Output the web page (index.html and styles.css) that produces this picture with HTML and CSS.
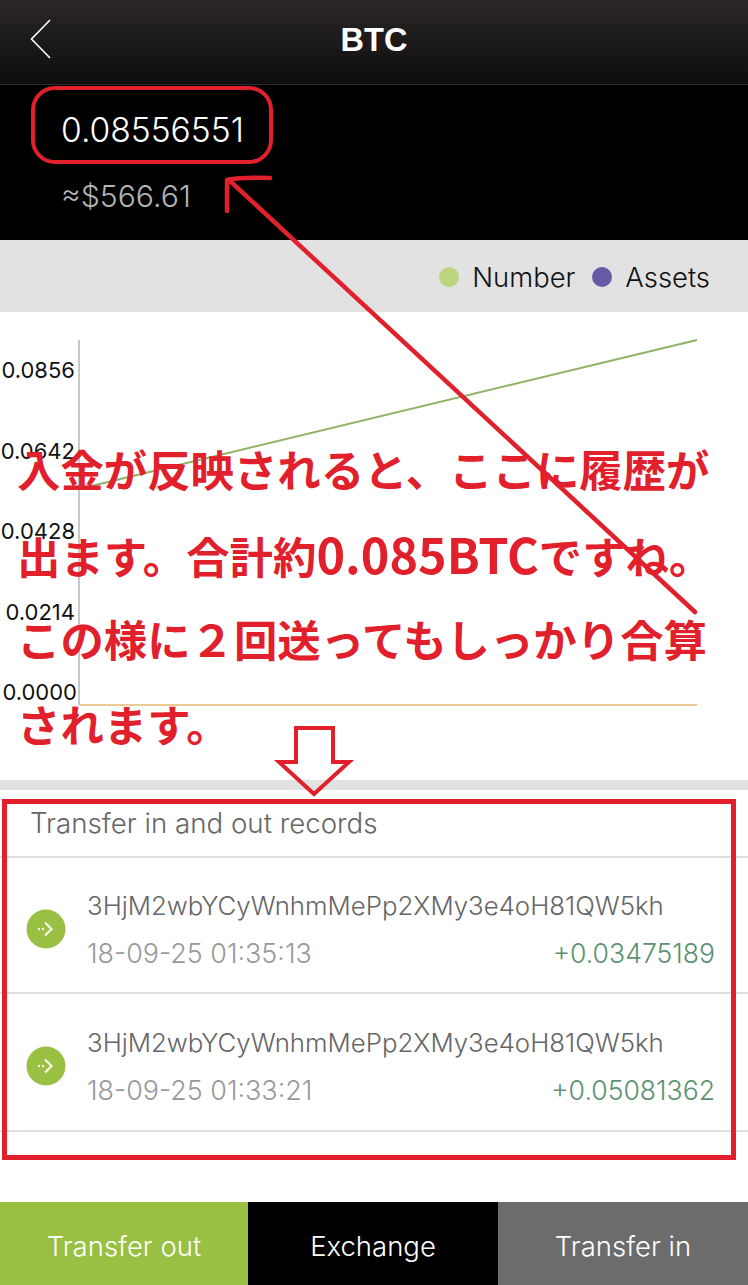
FILE: index.html
```html
<!DOCTYPE html>
<html lang="ja">
<head>
<meta charset="utf-8">
<title>BTC</title>
<link rel="stylesheet" href="styles.css">
</head>
<body>
<div class="page">
  <header class="topbar">
    <svg class="back" width="24" height="42" viewBox="0 0 24 42"><path d="M21 2 L2.5 21 L21 40" fill="none" stroke="#fff" stroke-width="1.6"/></svg>
    <h1 class="title">BTC</h1>
  </header>
  <section class="balance">
    <div class="amount">0.08556551</div>
    <div class="fiat">≈$566.61</div>
  </section>
  <div class="legend">
    <span class="dot dot-green"></span><span class="legend-label">Number</span>
    <span class="dot dot-purple"></span><span class="legend-label">Assets</span>
  </div>
  <section class="chart">
    <div class="yaxis">
      <span class="tick">0.0856</span>
      <span class="tick">0.0642</span>
      <span class="tick">0.0428</span>
      <span class="tick">0.0214</span>
      <span class="tick tick-c">0.0000</span>
    </div>
    <svg class="plot" width="670" height="468" viewBox="0 0 670 468">
      <line x1="1" y1="28" x2="1" y2="393" stroke="#c8c8c8" stroke-width="2"/>
      <line x1="1" y1="177" x2="619" y2="28" stroke="#8fb365" stroke-width="2"/>
      <line x1="1" y1="393" x2="619" y2="393" stroke="#eccb94" stroke-width="2"/>
    </svg>
  </section>
  <div class="strip"></div>
  <section class="records">
    <div class="records-title">Transfer in and out records</div>
    <div class="row">
      <svg class="coin" width="40" height="40" viewBox="0 0 40 40"><circle cx="20" cy="20" r="19.5" fill="#9ac043"/><path d="M19 13.5 L25.5 20 L19 26.5" fill="none" stroke="#f4f8e4" stroke-width="2.2"/><circle cx="13" cy="20" r="1.2" fill="#f4f8e4"/><circle cx="17" cy="20" r="1.2" fill="#f4f8e4"/></svg>
      <div class="row-body">
        <div class="addr">3HjM2wbYCyWnhmMePp2XMy3e4oH81QW5kh</div>
        <div class="row-meta"><span class="date">18-09-25 01:35:13</span><span class="delta">+0.03475189</span></div>
      </div>
    </div>
    <div class="row row-tall">
      <svg class="coin" width="40" height="40" viewBox="0 0 40 40"><circle cx="20" cy="20" r="19.5" fill="#9ac043"/><path d="M19 13.5 L25.5 20 L19 26.5" fill="none" stroke="#f4f8e4" stroke-width="2.2"/><circle cx="13" cy="20" r="1.2" fill="#f4f8e4"/><circle cx="17" cy="20" r="1.2" fill="#f4f8e4"/></svg>
      <div class="row-body">
        <div class="addr">3HjM2wbYCyWnhmMePp2XMy3e4oH81QW5kh</div>
        <div class="row-meta"><span class="date">18-09-25 01:33:21</span><span class="delta">+0.05081362</span></div>
      </div>
    </div>
  </section>
  <footer class="actions">
    <div class="action action-out">Transfer out</div>
    <div class="action action-ex">Exchange</div>
    <div class="action action-in">Transfer in</div>
  </footer>

  <svg class="marks" width="748" height="1285" viewBox="0 0 748 1285">
    <g fill="none" stroke="#e1202c" stroke-linejoin="round" stroke-linecap="round">
      <rect x="33" y="88" width="238" height="74" rx="22" stroke-width="4"/>
      <path d="M695 612 L229 180" stroke-width="4.5"/>
      <path d="M227 211 L227 180 Q240 177 270 178" stroke-width="4.5"/>
      <path d="M296 728 H333 V762 H349 L314 794 L279 762 H296 Z" stroke-width="4" stroke-linejoin="miter"/>
      <rect x="4.5" y="801.5" width="729" height="356" stroke-width="5" stroke-linejoin="miter"/>
    </g>
  </svg>
  <div class="note">
    <div class="note-line">入金が反映されると、ここに履歴が</div>
    <div class="note-line">出ます。合計約<span class="note-latin">0.085BTC</span>ですね。</div>
    <div class="note-line">この様に２回送ってもしっかり合算</div>
    <div class="note-line">されます。</div>
  </div>
</div>
</body>
</html>
```
FILE: styles.css
```css
* { box-sizing: border-box; }
html, body { margin: 0; padding: 0; background: #fff; }
.page {
  position: relative;
  width: 748px;
  height: 1285px;
  overflow: hidden;
  display: flex;
  flex-direction: column;
  font-family: Inter, "Liberation Sans", sans-serif;
}
.topbar {
  height: 85px;
  flex: none;
  display: flex;
  align-items: center;
  justify-content: center;
  position: relative;
  background: linear-gradient(#2b2728, #0e0c0d);
  border-bottom: 1px solid #2c2c2c;
}
.back { position: absolute; left: 29px; top: 18px; }
.title { margin: 0; color: #fff; font: 700 32.5px/1 "Liberation Sans", sans-serif; position: relative; top: -2px; }
.balance {
  height: 155px;
  flex: none;
  background: #000;
  padding: 25px 0 0 61px;
}
.amount { color: #fff; font-size: 33.6px; font-weight: 300; line-height: 40px; }
.fiat { color: #b4b4b4; font-size: 30.2px; font-weight: 300; line-height: 40px; margin-top: 26px; }
.legend {
  height: 72px;
  flex: none;
  background: #e2e2e2;
  display: flex;
  align-items: center;
  justify-content: flex-end;
  padding: 2px 38px 0 0;
  font-size: 27.4px;
  font-weight: 300;
  color: #111;
}
.dot { width: 20px; height: 20px; border-radius: 50%; }
.dot-green { background: #bdd57d; margin-right: 13px; }
.dot-purple { background: #675aa5; margin: 0 13px 0 17px; }
.chart { height: 468px; flex: none; display: flex; background: #fff; }
.yaxis {
  width: 78px;
  flex: none;
  display: flex;
  flex-direction: column;
  align-items: flex-end;
  padding: 43px 3px 0 0;
}
.tick { height: 80.5px; font-size: 22px; line-height: 30px; font-weight: 400; color: #111; }
.tick-c { margin-right: -2px; }
.plot { flex: none; }
.strip { height: 10px; flex: none; background: #e2e2e2; }
.records { flex: 1; background: #fff; }
.records-title {
  height: 68px;
  padding: 17px 0 0 30px;
  font-size: 27.7px;
  line-height: 32px;
  font-weight: 300;
  color: #666;
  border-bottom: 2px solid #e0e0e0;
}
.row {
  height: 136px;
  display: flex;
  align-items: center;
  padding: 0 33px 0 26px;
  border-bottom: 2px solid #e0e0e0;
}
.row-tall { height: 138px; }
.coin { flex: none; margin-right: 21px; margin-top: 8px; }
.row-body { flex: 1; display: flex; flex-direction: column; gap: 17px; margin-top: 9px; }
.addr { font-size: 25.8px; line-height: 30px; font-weight: 300; color: #666; white-space: nowrap; }
.row-meta { display: flex; justify-content: space-between; font-size: 26.9px; line-height: 30px; font-weight: 300; }
.date { color: #999; }
.delta { color: #5c9270; font-size: 26.6px; }
.actions { height: 83px; flex: none; display: flex; color: #fff; font-size: 27.5px; font-weight: 300; }
.action { display: flex; align-items: center; justify-content: center; padding-top: 4px; }
.action-out { width: 248px; background: #9ac043; }
.action-ex { width: 250px; background: #000; }
.action-in { width: 250px; background: #6c6c6c; }
.marks { position: absolute; left: 0; top: 0; pointer-events: none; }
.note {
  position: absolute;
  left: 17px;
  top: 426px;
  color: #e1202c;
  font: 700 43.4px/85px "Noto Sans CJK JP", sans-serif;
  white-space: nowrap;
}
.note-line { height: 85px; }
.note-latin { font-size: 48.5px; }
```
